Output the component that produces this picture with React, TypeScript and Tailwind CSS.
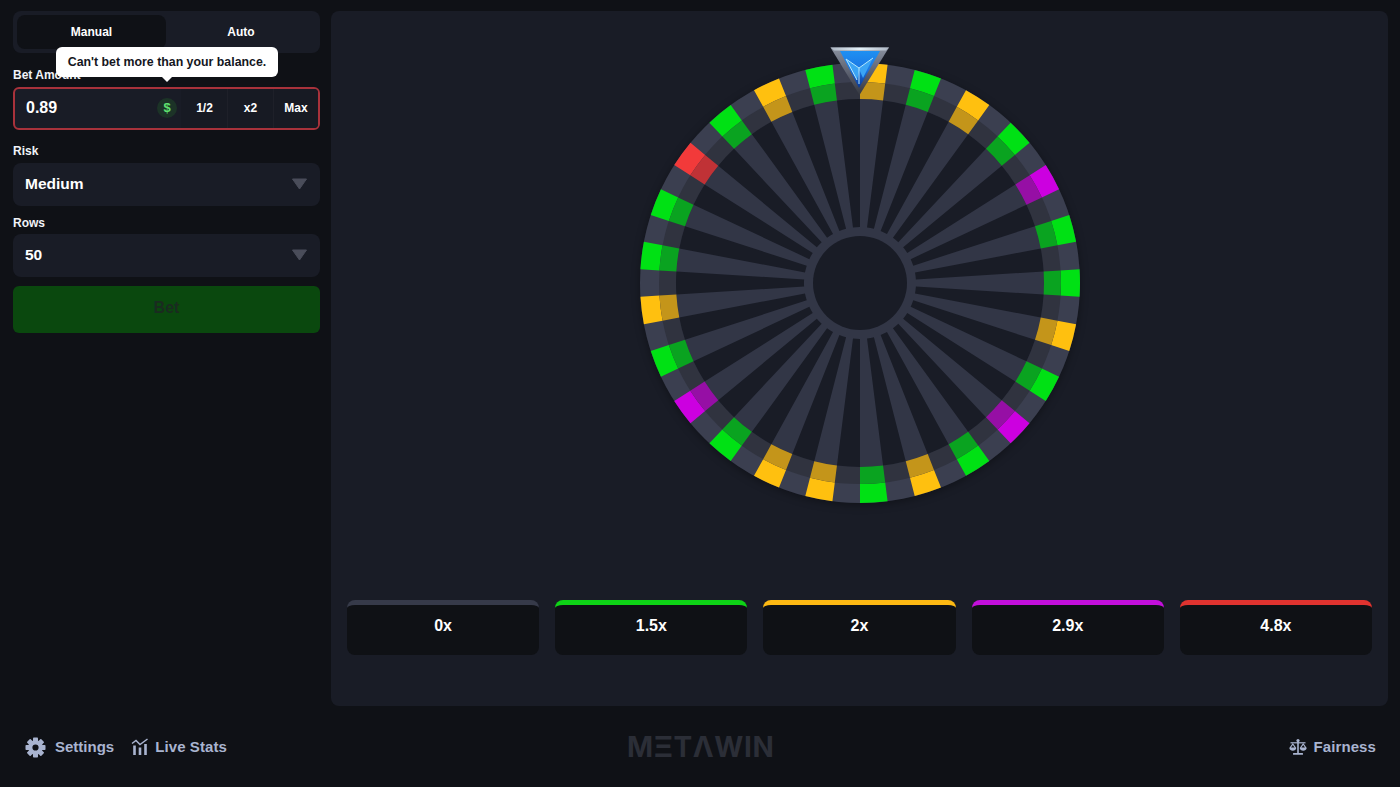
const font = "font-['Liberation_Sans',Arial,sans-serif]";

// every second slot of the wheel carries a colour, starting just right of the pointer
const COLORS: Record<string, [string, string]> = {
  g: ["#00e114", "#0aa320"],
  y: ["#ffc00f", "#c4951a"],
  p: ["#cc00e0", "#960fa5"],
  r: ["#f23a3a", "#c03236"],
};
const SEQ = ["y", "g", "y", "g", "p", "g", "g", "y", "g", "p", "g", "y", "g", "y", "y", "g", "p", "g", "y", "g", "g", "r", "g", "y", "g"];

const CX = 220;
const CY = 220;
const STEP = (Math.PI * 2) / 50;

function sector(i: number, r1: number, r2: number) {
  const a = i * STEP - Math.PI / 2;
  const b = a + STEP;
  const p = (r: number, t: number) => `${(CX + r * Math.cos(t)).toFixed(2)} ${(CY + r * Math.sin(t)).toFixed(2)}`;
  return `M${p(r1, a)} L${p(r2, a)} A${r2} ${r2} 0 0 1 ${p(r2, b)} L${p(r1, b)} A${r1} ${r1} 0 0 0 ${p(r1, a)}Z`;
}

function Wheel() {
  return (
    <div className="relative w-[440px] h-[440px] rounded-full shadow-[0_2px_8px_rgba(0,0,0,0.35)]">
      <svg width="440" height="440" viewBox="0 0 440 440" className="block">
        <circle cx={CX} cy={CY} r="220" fill="#3b3f50" />
        <circle cx={CX} cy={CY} r="201" fill="#30333f" />
        <circle cx={CX} cy={CY} r="184" fill="#323646" />
        {Array.from({ length: 25 }, (_, n) => (
          <path key={n} d={sector(n * 2 + 1, 56, 184)} fill="#191c26" />
        ))}
        {SEQ.map((c, n) => (
          <g key={n}>
            <path d={sector(n * 2, 201, 220)} fill={COLORS[c][0]} />
            <path d={sector(n * 2, 184, 201)} fill={COLORS[c][1]} />
          </g>
        ))}
        <circle cx={CX} cy={CY} r="47" fill="#191c26" />
      </svg>
      {/* pointer */}
      <svg width="60" height="50" viewBox="0 0 60 50" className="absolute left-[190px] top-[-17px]">
        <defs>
          <linearGradient id="rim" x1="0" y1="0" x2="0" y2="1">
            <stop offset="0" stopColor="#8a91a0" />
            <stop offset="0.6" stopColor="#565b69" />
            <stop offset="1" stopColor="#34373f" />
          </linearGradient>
          <linearGradient id="gem" x1="0" y1="0" x2="0" y2="1">
            <stop offset="0" stopColor="#1e90f2" />
            <stop offset="0.5" stopColor="#1a76e4" />
            <stop offset="1" stopColor="#0a3590" />
          </linearGradient>
          <linearGradient id="cap" x1="0" y1="0" x2="1" y2="0">
            <stop offset="0" stopColor="#aeb7c4" />
            <stop offset="0.5" stopColor="#e4f1f8" />
            <stop offset="1" stopColor="#aeb7c4" />
          </linearGradient>
        </defs>
        <path d="M0.5 1.5 L59 1.5 L29.5 49 Z" fill="url(#rim)" />
        <path d="M10 5 L50 5 L29 42 Z" fill="url(#gem)" />
        <path d="M0.5 1.5 L59 1.5 L56 4.5 L4 4.5 Z" fill="url(#cap)" />
        <path d="M16 13 L29 22 L43 12 L33 32 L29.5 24 L27 34 Z" fill="#3aa4f4" />
        <path d="M16 13 L29 22 L43 12 M29 22 V38 M16 13 L27 34" fill="none" stroke="#b4e8fc" strokeWidth="1" />
      </svg>
    </div>
  );
}

function Caret() {
  return (
    <svg width="17" height="12" viewBox="0 0 17 12">
      <path d="M1.5 1 H15.5 L8.5 11 Z" fill="#4a4d5a" stroke="#4a4d5a" strokeWidth="1" strokeLinejoin="round" />
    </svg>
  );
}

function Select({ value }: { value: string }) {
  return (
    <div className="h-[43px] rounded-lg bg-[#191c26] flex items-center justify-between pl-3 pr-3 pb-[1px] text-[15.5px] font-bold text-white">
      <span>{value}</span>
      <Caret />
    </div>
  );
}

function Label({ children }: { children: string }) {
  return <div className="text-xs font-bold text-[#f1f3f8] leading-[14px]">{children}</div>;
}

function Multiplier({ value, color }: { value: string; color: string }) {
  return (
    <div className="flex-1 h-[55px] pb-2 rounded-lg bg-[#0f1115] border-t-[5px] flex items-center justify-center text-base font-bold text-white" style={{ borderTopColor: color }}>
      {value}
    </div>
  );
}

function LiveStatsIcon() {
  return (
    <svg width="18" height="18" viewBox="0 0 18 18" fill="none" stroke="#a9b4d0">
      <path d="M1 5.5 L5 2.5 L9 6.5 L16.5 1" strokeWidth="1.5" />
      <path d="M3.5 7.5 V17 M9 9.5 V17 M14.5 6 V17" strokeWidth="2.6" />
    </svg>
  );
}

function GearIcon() {
  const teeth = [0, 45, 90, 135, 180, 225, 270, 315];
  return (
    <svg width="21" height="21" viewBox="0 0 21 21" fill="#a9b4d0">
      {teeth.map((t) => (
        <rect key={t} x="8" y="0.5" width="5" height="5" rx="0.8" transform={`rotate(${t} 10.5 10.5)`} />
      ))}
      <path fillRule="evenodd" d="M10.5 3.2a7.3 7.3 0 1 0 0 14.6a7.3 7.3 0 1 0 0-14.6Z M10.5 7.4a3.1 3.1 0 1 1 0 6.2a3.1 3.1 0 1 1 0-6.2Z" />
    </svg>
  );
}

function ScaleIcon() {
  return (
    <svg width="18" height="18" viewBox="0 0 18 18" fill="#a9b4d0">
      <circle cx="9" cy="2.6" r="1.6" />
      <rect x="8.2" y="3" width="1.6" height="12" />
      <rect x="4" y="15" width="10" height="1.7" rx="0.5" />
      <path d="M1.5 4.2 H16.5 V5.4 H1.5 Z" />
      <path d="M0.3 10 A3.6 3.6 0 0 0 7.3 10 L3.8 5 Z M2 9.6 L3.8 7 L5.6 9.6 Z" fillRule="evenodd" />
      <path d="M10.7 10 A3.6 3.6 0 0 0 17.7 10 L14.2 5 Z M12.4 9.6 L14.2 7 L16 9.6 Z" fillRule="evenodd" />
    </svg>
  );
}

export default function App() {
  return (
    <div className={`${font} w-full h-screen bg-[#0f1116] flex flex-col overflow-hidden`}>
      <div className="flex h-[706px] pt-[11px] pl-[13px] pr-3 gap-[11px]">
        {/* Sidebar */}
        <aside className="w-[307px] shrink-0 flex flex-col">
          <div className="relative h-[42px] rounded-lg bg-[#191c26] p-1 flex text-xs font-bold text-white">
            <div className="w-[149px] rounded-lg bg-[#0f1116] flex items-center justify-center">Manual</div>
            <div className="flex-1 flex items-center justify-center">Auto</div>
            <div className="absolute left-[43px] top-9 z-10 w-[222px] h-[30px] rounded-md bg-white text-[12.35px] text-[#14161d] flex items-center justify-center whitespace-nowrap">
              Can't bet more than your balance.
              <span className="absolute left-[105px] bottom-[-5px] w-0 h-0 border-x-[6px] border-x-transparent border-t-[6px] border-t-white" />
            </div>
          </div>
          <div className="mt-[15px] mb-[5px]">
            <Label>Bet Amount</Label>
          </div>
          <div className="h-[43px] rounded-md border-2 border-[#a8323b] bg-[#191c26] flex items-stretch text-xs font-bold text-white overflow-hidden">
            <div className="flex-1 flex items-center justify-between pl-[11px] pr-[4px] pb-[2px] text-base">
              <span>0.89</span>
              <span className="w-[20px] h-[20px] rounded-full bg-[#1c3327] flex items-center justify-center text-[13px] text-[#5fe06f]">$</span>
            </div>
            <div className="w-[46px] pl-[1px] pb-[2px] bg-[#171a23] flex items-center justify-center">1/2</div>
            <div className="w-[46px] pb-[2px] bg-[#171a23] border-l border-[#1e2029] flex items-center justify-center">x2</div>
            <div className="w-[45px] pb-[2px] bg-[#171a23] border-l border-[#1e2029] flex items-center justify-center">Max</div>
          </div>
          <div className="mt-[14px] mb-[5px]">
            <Label>Risk</Label>
          </div>
          <Select value="Medium" />
          <div className="mt-[10px] mb-[4px]">
            <Label>Rows</Label>
          </div>
          <Select value="50" />
          <div className="mt-[9px] h-[47px] pb-[3px] rounded-md bg-[#0a480e] flex items-center justify-center text-base font-bold text-[#1a2b20]">Bet</div>
        </aside>

        {/* Game panel */}
        <main className="flex-1 rounded-lg bg-[#191c26] flex flex-col items-center pt-[52px] px-4">
          <Wheel />
          <div className="w-full mt-[97px] flex gap-4">
            <Multiplier value="0x" color="#363a49" />
            <Multiplier value="1.5x" color="#0ed316" />
            <Multiplier value="2x" color="#fdb913" />
            <Multiplier value="2.9x" color="#c30fdb" />
            <Multiplier value="4.8x" color="#e0332f" />
          </div>
        </main>
      </div>

      {/* Footer */}
      <footer className="flex-1 flex items-center justify-between pl-[25px] pr-6 pt-[1px] text-[15px] font-bold text-[#a9b4d0] relative">
        <div className="flex items-center">
          <GearIcon />
          <span className="ml-[9px]">Settings</span>
          <span className="ml-[17px]"><LiveStatsIcon /></span>
          <span className="ml-[6px] tracking-[0.1px]">Live Stats</span>
        </div>
        <div className="absolute left-[627px] text-[28px] leading-none font-bold text-[#2b2e37] tracking-[0.6px] font-['Inter',sans-serif]">MΞTΛWIN</div>
        <div className="flex items-center">
          <ScaleIcon />
          <span className="ml-[7px] tracking-[0.1px]">Fairness</span>
        </div>
      </footer>
    </div>
  );
}
